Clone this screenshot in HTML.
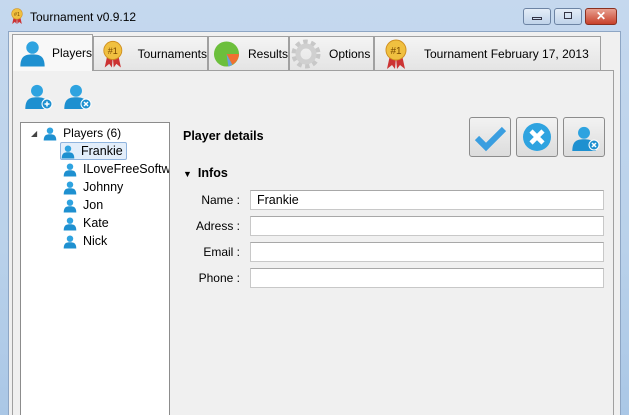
<!DOCTYPE html><html><head><style>
*{margin:0;padding:0;box-sizing:border-box}
body{width:629px;height:415px;overflow:hidden;background:linear-gradient(#c5d8ee,#b9d1ea 60%,#aac7e6);font-family:"Liberation Sans",sans-serif;font-size:12px;color:#000;position:relative}
.abs{position:absolute}
.client{left:8px;top:31px;width:613px;height:384px;background:#f0f0f0;border:1px solid #8ea6c4;border-bottom:none}
.tab{top:36px;height:34px;border:1px solid #a0a0a0;border-bottom:none;background:linear-gradient(#f4f4f4,#e4e4e4);display:flex;align-items:center;font-size:12px;white-space:nowrap;overflow:hidden}
.panel{left:12px;top:70px;width:602px;height:345px;border:1px solid #a0a0a0;border-bottom:none;background:#f0f0f0}
.tree{left:20px;top:122px;width:150px;height:293px;background:#fff;border:1px solid #8c8c8c;border-bottom:none;overflow:hidden}
.row{position:absolute;left:0;height:18px;display:flex;align-items:center;font-size:12.5px;white-space:nowrap}
.lbl{position:absolute;left:195px;font-size:12px;width:45px;text-align:right}
.inp{position:absolute;left:250px;width:354px;height:20px;background:#fff;border:1px solid #c8c8c8;border-top-color:#a8a8a8;padding-left:6px;font-size:12.5px;line-height:18px}
.btn{top:117px;width:42px;height:40px;border:1px solid #8c8c8c;border-radius:3px;background:linear-gradient(#f2f2f2,#dcdcdc)}
.wb{top:8px;height:17px;border:1px solid #6d84a4;border-radius:3px;background:linear-gradient(#e4edf7,#c0d3ea)}
</style></head><body>
<svg width="0" height="0" style="position:absolute"><defs>
<symbol id="p" viewBox="0 0 20 20"><circle cx="10" cy="6" r="4.6" fill="#2ea3e0"/><path d="M1 20 C1 12 5 11 10 11 C15 11 19 12 19 20Z" fill="#1e90d0"/></symbol>
<symbol id="ribbon" viewBox="0 0 24 30"><path d="M6 16 L3 30 L8 26 L11 30 L12 18Z M18 16 L21 30 L16 26 L13 30 L12 18Z" fill="#c33"/><circle cx="12" cy="11" r="10" fill="#f0c040" stroke="#d09020"/><text x="12" y="15" font-size="10" text-anchor="middle" fill="#7a4a00" font-family="Liberation Sans">#1</text></symbol>
</defs></svg>
<div class="abs" style="left:10px;top:8px;width:14px;height:16px"><svg width="14" height="16"><use href="#ribbon"/></svg></div>
<div class="abs" style="left:30px;top:10px;font-size:12px">Tournament v0.9.12</div>
<div class="abs wb" style="left:523px;width:28px"><div style="margin:8px auto 0;width:10px;height:3px;border:1px solid #334"></div></div>
<div class="abs wb" style="left:554px;width:28px"><div style="margin:3px auto 0;width:8px;height:7px;border:1px solid #334"></div></div>
<div class="abs wb" style="left:585px;width:32px;background:linear-gradient(#e8a090,#c8402a);border-color:#8a3020;color:#fff;text-align:center;font-weight:bold;font-size:12px;line-height:15px">✕</div>
<div class="abs client"></div>
<div class="abs panel"></div>
<div class="abs tab" style="left:12px;width:81px;top:34px;height:37px;background:#f8f8f8;z-index:2"><svg width="30" height="30" style="margin:0 6px 0 6px"><use href="#p"/></svg>Players</div>
<div class="abs tab" style="left:93px;width:115px"><svg width="24" height="30" style="margin:0 14px 0 8px"><use href="#ribbon"/></svg>Tournaments</div>
<div class="abs tab" style="left:208px;width:81px"><svg width="28" height="28" viewBox="0 0 28 28" style="margin:0 8px 0 4px"><circle cx="14" cy="14" r="13" fill="#6cbf3c"/><path d="M14 14 L27 14 A13 13 0 0 1 20 25Z" fill="#f07030"/><path d="M14 14 L20 25 A13 13 0 0 1 16 27Z" fill="#6aa0e0"/></svg>Results</div>
<div class="abs tab" style="left:289px;width:85px"><svg width="30" height="30" viewBox="0 0 30 30" style="margin:0 8px 0 1px"><circle cx="15" cy="15" r="11" fill="none" stroke="#c8c8c8" stroke-width="7" stroke-dasharray="4 3"/><circle cx="15" cy="15" r="8" fill="none" stroke="#d0d0d0" stroke-width="5"/></svg>Options</div>
<div class="abs tab" style="left:374px;width:227px"><svg width="24" height="30" style="margin:0 16px 0 9px"><use href="#ribbon"/></svg>Tournament February 17, 2013</div>
<svg class="abs" style="left:24px;top:82px" width="30" height="30"><use href="#p" width="26" height="28"/><circle cx="23" cy="22" r="5" fill="#1e90d0" stroke="#fff"/><path d="M20.5 22h5M23 19.5v5" stroke="#fff" stroke-width="1.5"/></svg>
<svg class="abs" style="left:63px;top:82px" width="30" height="30"><use href="#p" width="26" height="28"/><circle cx="23" cy="22" r="5" fill="#1e90d0" stroke="#fff"/><path d="M21 20l4 4M25 20l-4 4" stroke="#fff" stroke-width="1.5"/></svg>
<div class="abs tree">
<div class="row" style="left:10px;top:1px"><span style="font-size:8px;color:#444;margin-right:6px">◢</span><svg width="14" height="15"><use href="#p"/></svg><span style="margin-left:6px;font-size:12px">Players (6)</span></div>
<div class="row" style="left:39px;top:19px;background:#e3eefa;border:1px solid #90b4de;border-radius:2px;padding-right:3px;height:18px"><svg width="14" height="15"><use href="#p"/></svg><span style="margin-left:6px">Frankie</span></div>
<div class="row" style="left:42px;top:37px"><svg width="14" height="15"><use href="#p"/></svg><span style="margin-left:6px">ILoveFreeSoftware</span></div>
<div class="row" style="left:42px;top:55px"><svg width="14" height="15"><use href="#p"/></svg><span style="margin-left:6px">Johnny</span></div>
<div class="row" style="left:42px;top:73px"><svg width="14" height="15"><use href="#p"/></svg><span style="margin-left:6px">Jon</span></div>
<div class="row" style="left:42px;top:91px"><svg width="14" height="15"><use href="#p"/></svg><span style="margin-left:6px">Kate</span></div>
<div class="row" style="left:42px;top:109px"><svg width="14" height="15"><use href="#p"/></svg><span style="margin-left:6px">Nick</span></div>
</div>
<div class="abs" style="left:183px;top:129px;font-weight:bold;font-size:12.5px">Player details</div>
<div class="abs" style="left:183px;top:166px;font-weight:bold;font-size:12.5px"><span style="font-size:9px;margin-right:6px">▼</span>Infos</div>
<div class="abs btn" style="left:469px"><svg width="40" height="38" viewBox="0 0 40 38"><path d="M7 20 L16 29 L34 11" fill="none" stroke="#3a9ee0" stroke-width="6"/></svg></div>
<div class="abs btn" style="left:516px"><svg width="40" height="38" viewBox="0 0 40 38"><circle cx="20" cy="19" r="14" fill="#2ea3e0"/><path d="M14 13l12 12M26 13l-12 12" stroke="#fff" stroke-width="4.5"/></svg></div>
<div class="abs btn" style="left:563px"><svg width="40" height="38" viewBox="0 0 40 38"><svg x="7" y="5" width="26" height="30" viewBox="0 0 20 20"><use href="#p"/></svg><circle cx="30" cy="27" r="5" fill="#1e90d0" stroke="#fff"/><path d="M28 25l4 4M32 25l-4 4" stroke="#fff" stroke-width="1.5"/></svg></div>
<div class="lbl" style="top:193px">Name :</div><div class="inp" style="top:190px">Frankie</div>
<div class="lbl" style="top:219px">Adress :</div><div class="inp" style="top:216px"></div>
<div class="lbl" style="top:245px">Email :</div><div class="inp" style="top:242px"></div>
<div class="lbl" style="top:271px">Phone :</div><div class="inp" style="top:268px"></div>
</body></html>
